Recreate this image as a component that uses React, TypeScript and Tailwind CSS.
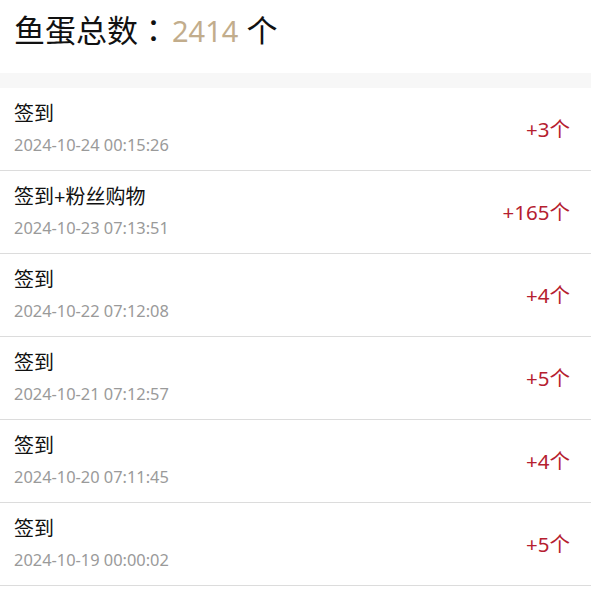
import React from 'react';

interface EggRecord {
  title: string;
  time: string;
  amount: number;
}

const records: EggRecord[] = [
  { title: '签到', time: '2024-10-24 00:15:26', amount: 3 },
  { title: '签到+粉丝购物', time: '2024-10-23 07:13:51', amount: 165 },
  { title: '签到', time: '2024-10-22 07:12:08', amount: 4 },
  { title: '签到', time: '2024-10-21 07:12:57', amount: 5 },
  { title: '签到', time: '2024-10-20 07:11:45', amount: 4 },
  { title: '签到', time: '2024-10-19 00:00:02', amount: 5 },
];

export default function App() {
  return (
    <div className="min-h-screen bg-white font-['Noto_Sans','Noto_Sans_CJK_SC',sans-serif] text-[#111]">
      <div className="h-[73px] px-[14px] pt-[9px]">
        <h1 className="text-[31px] leading-[40px]">
          鱼蛋总数<span className="font-['Noto_Sans_CJK_TC',sans-serif]">：</span>
          <span className="ml-[3px] text-[29px] text-[#c2ad8c]">2414</span> 个
        </h1>
      </div>
      <div className="h-[15px] bg-[#f7f7f7]" />
      <div>
        {records.map((r, i) => (
          <div key={i} className="flex h-[83px] items-center justify-between border-b border-[#dcdcdc] pl-[14px] pr-[21px]">
            <div className="-mt-[4px] flex flex-col">
              <span className="text-[20px] leading-[28px]">{r.title}</span>
              <span className="mt-[7px] text-[16.4px] leading-[20px] text-[#9a9a9a]">{r.time}</span>
            </div>
            <span className="text-[20.5px] text-[#b5202f]">+{r.amount}个</span>
          </div>
        ))}
      </div>
    </div>
  );
}
